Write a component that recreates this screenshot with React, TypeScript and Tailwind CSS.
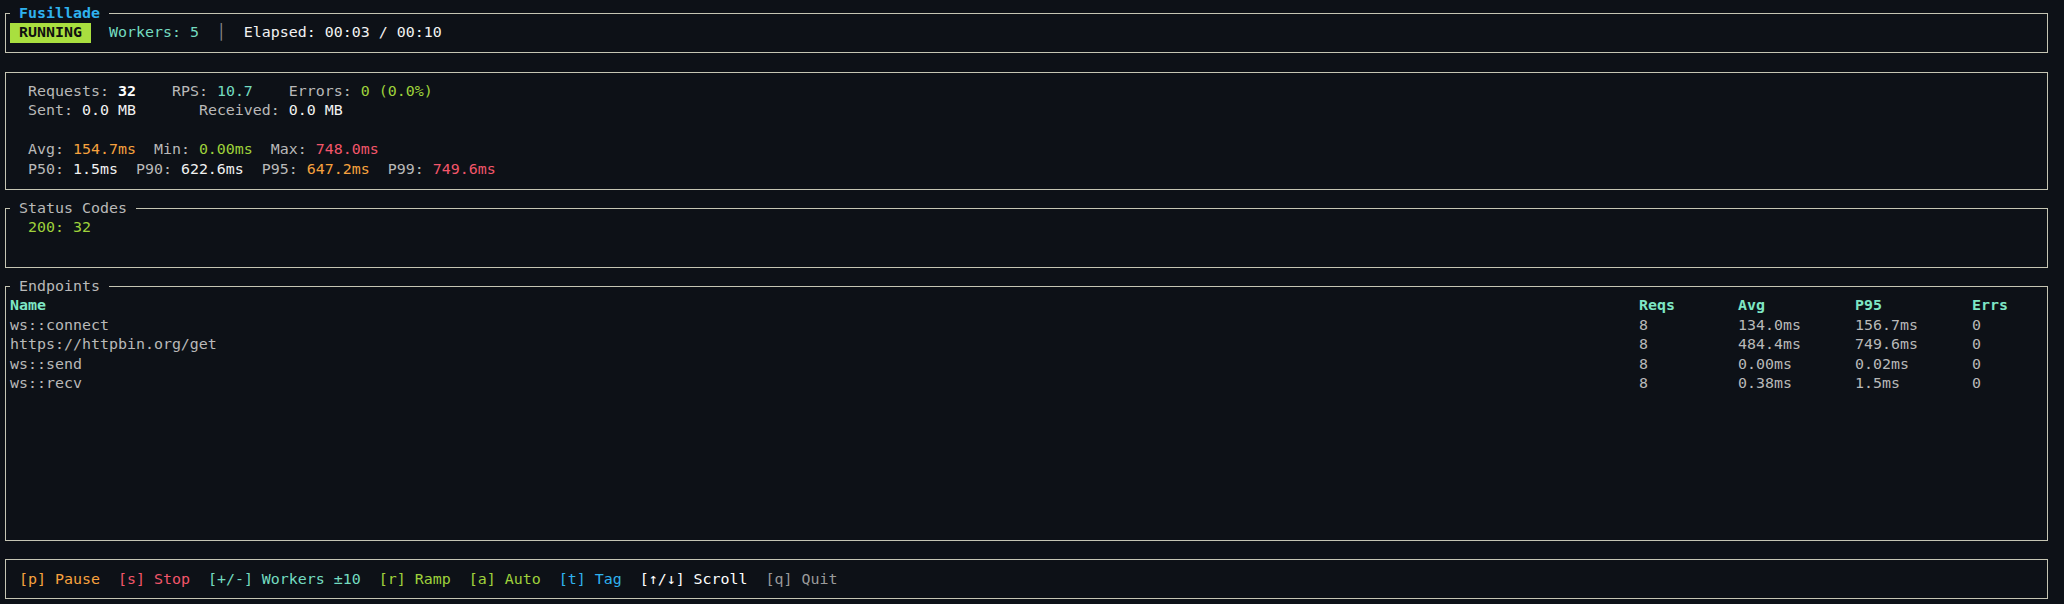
import React from "react";

const ROW = "h-[19.52px] leading-[19.52px]";

function Box({
  title,
  titleClass,
  children,
  className = "",
}: {
  title?: string;
  titleClass?: string;
  children: React.ReactNode;
  className?: string;
}) {
  return (
    <div
      className={`relative w-[2043px] border border-[#c5c5b3] pt-[9.26px] pb-[9.26px] pl-[4px] ${className}`}
    >
      {title && (
        <span
          className={`absolute left-[4px] top-[-10.26px] ${ROW} bg-[#0d1117] whitespace-pre ${titleClass ?? ""}`}
        >
          {` ${title} `}
        </span>
      )}
      {children}
    </div>
  );
}

const endpoints = [
  { name: "ws::connect", reqs: "8", avg: "134.0ms", p95: "156.7ms", errs: "0" },
  { name: "https://httpbin.org/get", reqs: "8", avg: "484.4ms", p95: "749.6ms", errs: "0" },
  { name: "ws::send", reqs: "8", avg: "0.00ms", p95: "0.02ms", errs: "0" },
  { name: "ws::recv", reqs: "8", avg: "0.38ms", p95: "1.5ms", errs: "0" },
];

export default function App() {
  const lbl = "text-[#b9b9b9]";
  const white = "text-[#f2f2f2]";
  const cyan = "text-[#74dcc0]";
  const green = "text-[#9fd13b]";
  const orange = "text-[#f7a23e]";
  const red = "text-[#f3566a]";
  const blue = "text-[#2fb2ee]";

  return (
    <div
      className="min-h-[604px] w-[2064px] bg-[#0d1117] pl-[5px] pt-[13px] text-[14.95px] text-[#bdbdbd] flex flex-col gap-[18.52px]"
      style={{ fontFamily: '"DejaVu Sans Mono", "Liberation Mono", monospace' }}
    >
      {/* Header */}
      <Box title="Fusillade" titleClass="font-bold text-[#2fb2ee]">
        <div className={`${ROW} whitespace-pre flex`}>
          <span className="bg-[#a9df3f] text-[#101010] font-bold">{" RUNNING "}</span>
          <span className={cyan}>{"  Workers: 5"}</span>
          <span className="text-[#8a8a8a]">{"  │  "}</span>
          <span className={white}>{"Elapsed: 00:03 / 00:10"}</span>
        </div>
      </Box>

      {/* Summary */}
      <Box>
        <div className="pl-[18px] whitespace-pre">
          <div className={ROW}>
            <span className={lbl}>Requests: </span>
            <span className="font-bold text-white">32</span>
            <span className={lbl}>{"    RPS: "}</span>
            <span className={cyan}>10.7</span>
            <span className={lbl}>{"    Errors: "}</span>
            <span className={green}>0 (0.0%)</span>
          </div>
          <div className={ROW}>
            <span className={lbl}>Sent: </span>
            <span className={white}>0.0 MB</span>
            <span className={lbl}>{"       Received: "}</span>
            <span className={white}>0.0 MB</span>
          </div>
          <div className={ROW}></div>
          <div className={ROW}>
            <span className={lbl}>Avg: </span>
            <span className={orange}>154.7ms</span>
            <span className={lbl}>{"  Min: "}</span>
            <span className={green}>0.00ms</span>
            <span className={lbl}>{"  Max: "}</span>
            <span className={red}>748.0ms</span>
          </div>
          <div className={ROW}>
            <span className={lbl}>P50: </span>
            <span className={white}>1.5ms</span>
            <span className={lbl}>{"  P90: "}</span>
            <span className={white}>622.6ms</span>
            <span className={lbl}>{"  P95: "}</span>
            <span className={orange}>647.2ms</span>
            <span className={lbl}>{"  P99: "}</span>
            <span className={red}>749.6ms</span>
          </div>
        </div>
      </Box>

      {/* Status codes */}
      <Box title="Status Codes" titleClass="text-[#b9b9b9]">
        <div className="pl-[18px] whitespace-pre">
          <div className={`${ROW} ${green}`}>200: 32</div>
          <div className={ROW}></div>
        </div>
      </Box>

      {/* Endpoints */}
      <Box title="Endpoints" titleClass="text-[#b9b9b9]">
        <div className="h-[234.24px] whitespace-pre">
          <div className="grid grid-cols-[1629px_99px_117px_117px_auto]">
            {["Name", "Reqs", "Avg", "P95", "Errs"].map((h) => (
              <div key={h} className={`${ROW} font-bold text-[#7ee6c4]`}>
                {h}
              </div>
            ))}
            {endpoints.map((e) => (
              <React.Fragment key={e.name}>
                <div className={`${ROW} ${lbl}`}>{e.name}</div>
                <div className={`${ROW} ${lbl}`}>{e.reqs}</div>
                <div className={`${ROW} ${lbl}`}>{e.avg}</div>
                <div className={`${ROW} ${lbl}`}>{e.p95}</div>
                <div className={`${ROW} ${lbl}`}>{e.errs}</div>
              </React.Fragment>
            ))}
          </div>
        </div>
      </Box>

      {/* Footer */}
      <Box>
        <div className={`${ROW} pl-[9px] whitespace-pre`}>
          <span className={orange}>[p] Pause</span>
          {"  "}
          <span className={red}>[s] Stop</span>
          {"  "}
          <span className={cyan}>[+/-] Workers ±10</span>
          {"  "}
          <span className={green}>[r] Ramp</span>
          {"  "}
          <span className={green}>[a] Auto</span>
          {"  "}
          <span className={blue}>[t] Tag</span>
          {"  "}
          <span className="text-white">[↑/↓] Scroll</span>
          {"  "}
          <span className="text-[#9a9a9a]">[q] Quit</span>
        </div>
      </Box>
    </div>
  );
}
